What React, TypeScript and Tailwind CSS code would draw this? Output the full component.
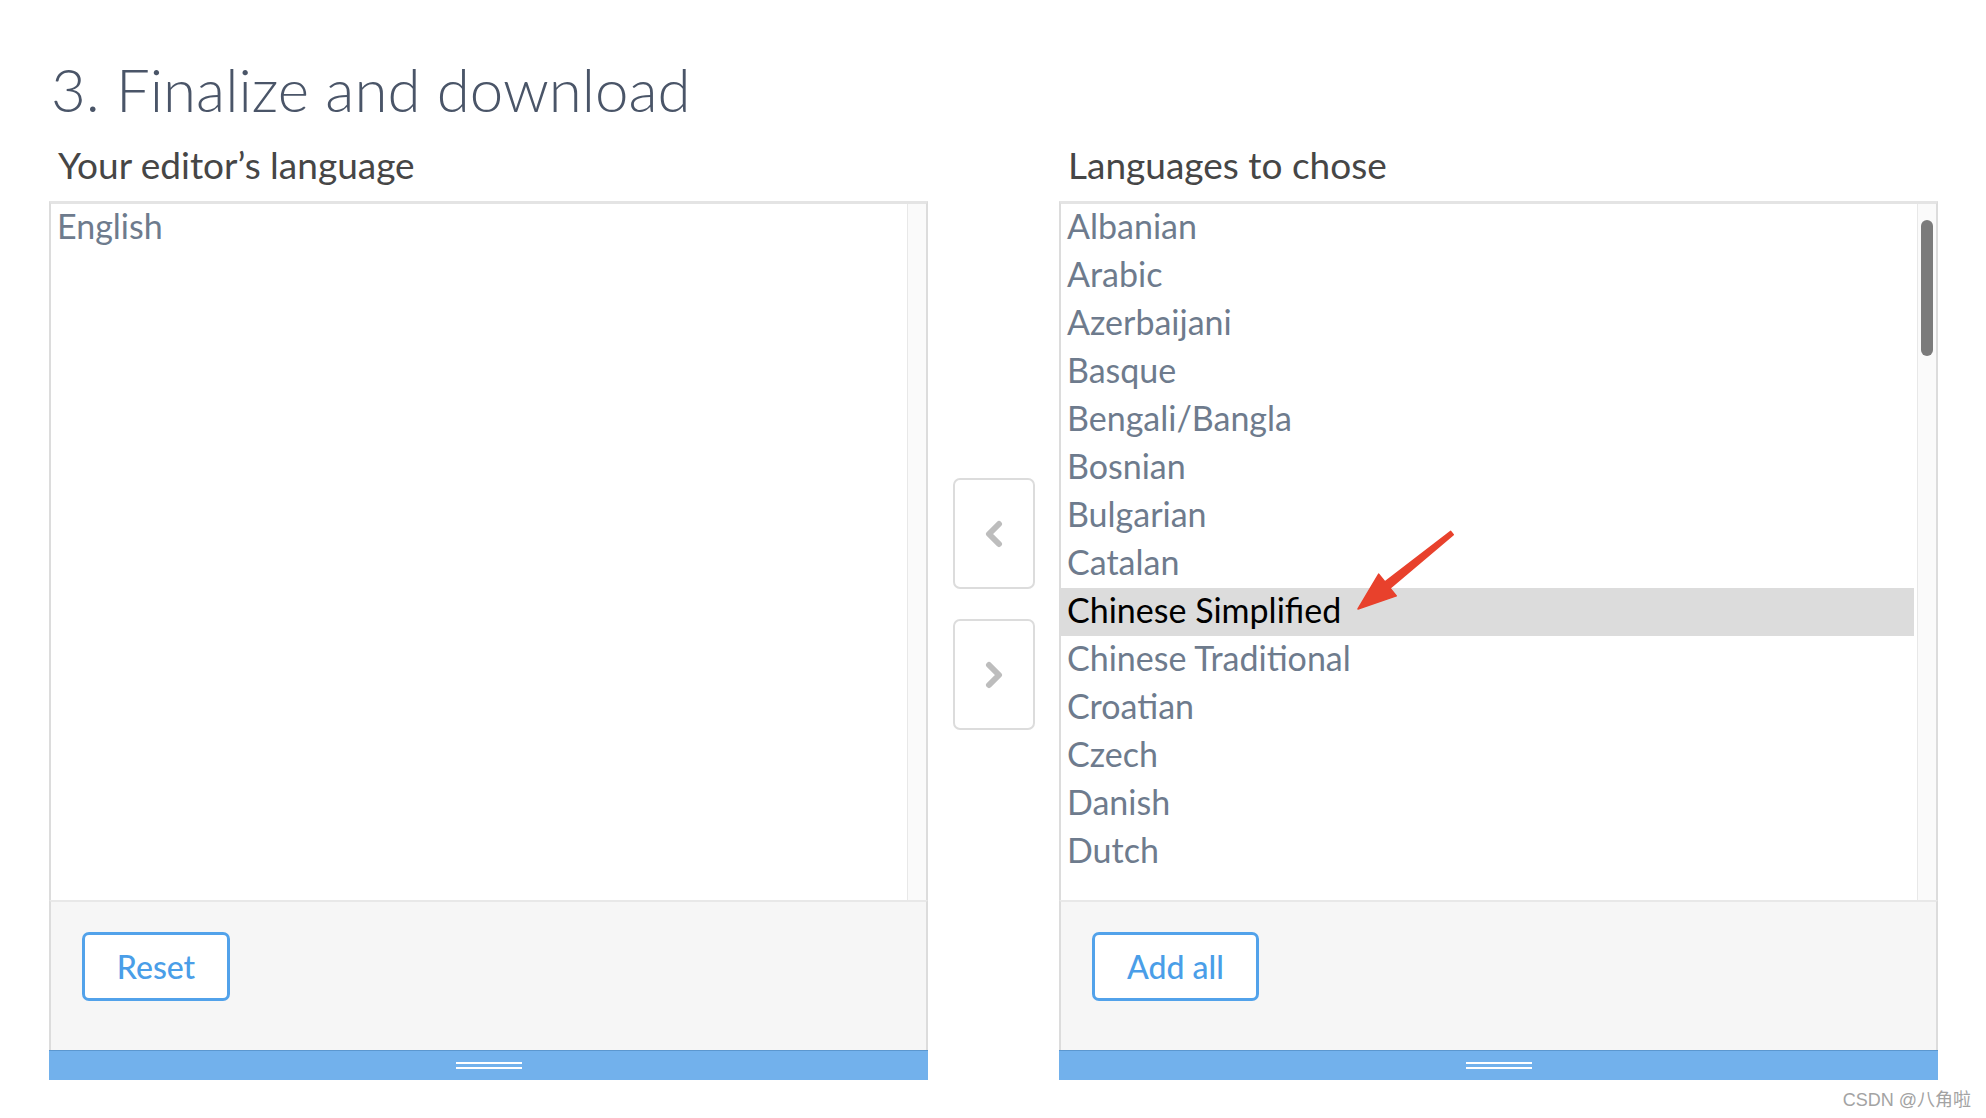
import React from "react";

const languages = [
  "Albanian",
  "Arabic",
  "Azerbaijani",
  "Basque",
  "Bengali/Bangla",
  "Bosnian",
  "Bulgarian",
  "Catalan",
  "Chinese Simplified",
  "Chinese Traditional",
  "Croatian",
  "Czech",
  "Danish",
  "Dutch",
];

type PanelProps = {
  label: string;
  items: string[];
  selected?: string;
  button: string;
  buttonWidth: string;
  scrollThumb?: boolean;
};

const Panel = ({ label, items, selected, button, buttonWidth, scrollThumb }: PanelProps) => {
  return (
    <div className="flex w-[879px] flex-col">
      <p className="pl-[9px] pt-[3px] text-[37px] leading-[37px] text-[#464646]">{label}</p>
      <div className="mt-[18px] flex flex-col">
        {/* list */}
        <div className="flex h-[699px] border-x-2 border-t-[3px] border-x-[#dcdcdc] border-t-[#e4e4e4] bg-white">
          <div className="flex-1 overflow-hidden pr-[3px]">
            {items.map((item) => (
              <div
                key={item}
                className={
                  item === selected
                    ? "h-[48px] bg-[#dcdcdc] pb-[4px] pl-[6px] text-[34px] leading-[44px] text-black"
                    : "h-[48px] pb-[4px] pl-[6px] text-[34px] leading-[44px] text-[#6e7b8d]"
                }
              >
                {item}
              </div>
            ))}
          </div>
          <div className="flex w-[19px] flex-col items-center border-l border-[#e8e8e8] bg-[#fafafa] pt-[16px]">
            {scrollThumb && <div className="h-[136px] w-[12px] rounded-full bg-[#7b7b7b]" />}
          </div>
        </div>
        {/* footer */}
        <div className="h-[150px] border-x-2 border-t-2 border-x-[#dcdcdc] border-t-[#e8e8e8] bg-[#f6f6f6] pl-[31px] pt-[30px]">
          <button
            className={`${buttonWidth} h-[69px] rounded-[7px] border-[3px] border-[#52a2ea] bg-white text-[32px] font-medium text-[#4a9ee8]`}
          >
            {button}
          </button>
        </div>
        {/* resize bar */}
        <div className="flex h-[30px] flex-col items-center justify-center gap-[3px] border-t border-[#5b97cf] bg-[#72b1ec]">
          <div className="h-[2px] w-[66px] bg-white" />
          <div className="h-[2px] w-[66px] bg-white" />
        </div>
      </div>
    </div>
  );
};

const Chevron = ({ dir }: { dir: "left" | "right" }) => (
  <svg width="20" height="28" viewBox="0 0 20 28" fill="none">
    <polyline
      points={dir === "left" ? "15,4 5,14 15,24" : "5,4 15,14 5,24"}
      stroke="#bdbdbd"
      strokeWidth="6"
      strokeLinecap="round"
      strokeLinejoin="round"
    />
  </svg>
);

const App = () => {
  return (
    <div className="relative min-h-[1118px] w-full bg-white font-['Lato','Noto_Sans',sans-serif]">
      <h1 className="pl-[51px] pt-[59px] text-[60px] font-light leading-[60px] text-[#4a5568]">
        3. Finalize and download
      </h1>

      <div className="mt-[24px] flex pl-[49px]">
        <Panel label="Your editor’s language" items={["English"]} button="Reset" buttonWidth="w-[148px]" />

        {/* move buttons */}
        <div className="flex w-[131px] flex-col items-center gap-[30px] pt-[335px]">
          <button className="flex h-[111px] w-[82px] items-center justify-center rounded-[7px] border-2 border-[#dcdcdc] bg-white">
            <Chevron dir="left" />
          </button>
          <button className="flex h-[111px] w-[82px] items-center justify-center rounded-[7px] border-2 border-[#dcdcdc] bg-white">
            <Chevron dir="right" />
          </button>
        </div>

        <Panel
          label="Languages to chose"
          items={languages}
          selected="Chinese Simplified"
          button="Add all"
          buttonWidth="w-[167px]"
          scrollThumb
        />
      </div>

      <div className="mt-[10px] flex justify-end pr-[15px]">
        <span className="text-[18px] leading-[20px] text-[#a3a3a3] font-['Liberation_Sans','Noto_Sans_CJK_SC',sans-serif]">
          CSDN @八角啦
        </span>
      </div>

      {/* annotation arrow */}
      <svg className="absolute left-[1340px] top-[520px]" width="130" height="100" viewBox="0 0 130 100">
        <polygon
          points="18,89 56.3,75.9 50,68.1 113.3,14.6 110.7,11.4 45,61.9 38.7,54.1"
          fill="#e8412c"
          stroke="#e8412c"
          strokeWidth="1.5"
          strokeLinejoin="round"
        />
      </svg>
    </div>
  );
};

export default App;
